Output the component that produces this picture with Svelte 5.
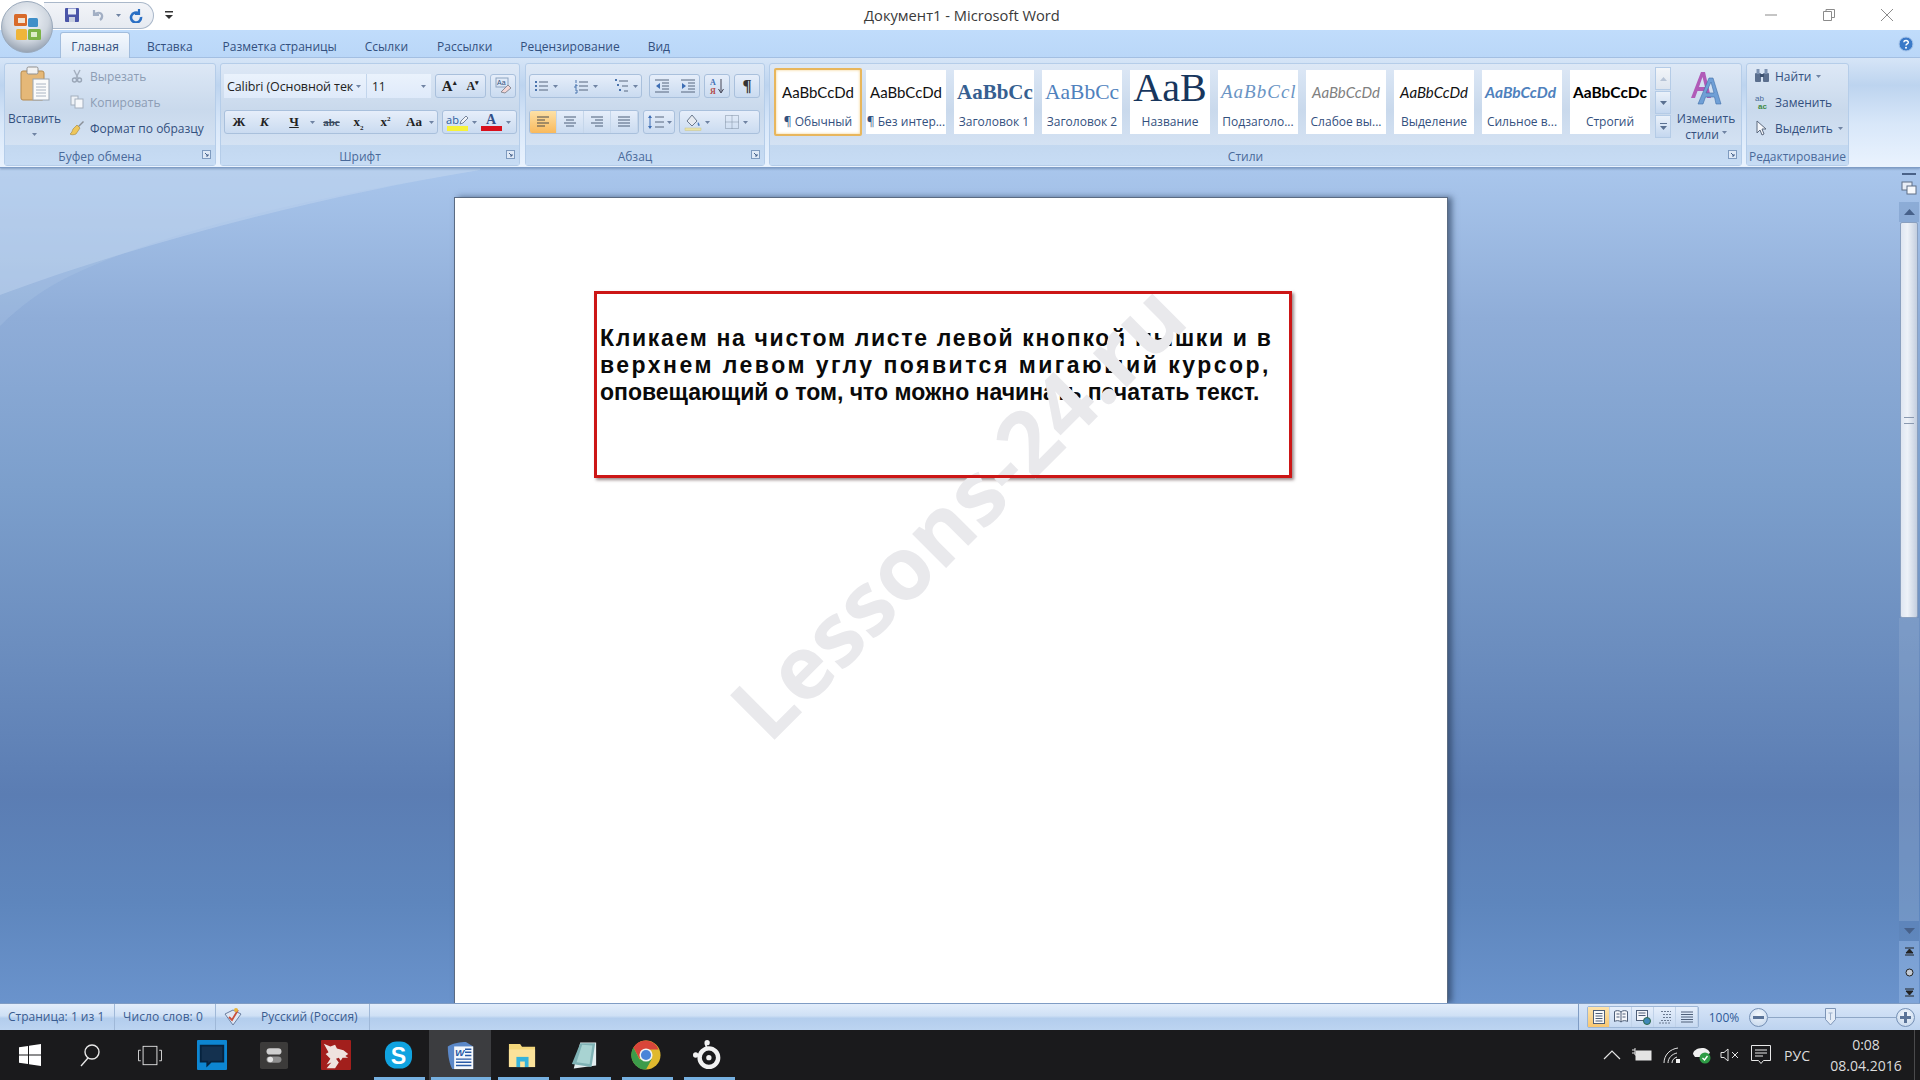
<script>
    const tabs = ["Главная", "Вставка", "Разметка страницы", "Ссылки", "Рассылки", "Рецензирование", "Вид"];

    const styles = [
        { cls: "normal", sample: "AaBbCcDd", name: "¶ Обычный", on: true },
        { cls: "normal", sample: "AaBbCcDd", name: "¶ Без интер..." },
        { cls: "h1", sample: "AaBbCc", name: "Заголовок 1" },
        { cls: "h2", sample: "AaBbCc", name: "Заголовок 2" },
        { cls: "title", sample: "AaB", name: "Название" },
        { cls: "sub", sample: "AaBbCcl", name: "Подзаголо..." },
        { cls: "weak", sample: "AaBbCcDd", name: "Слабое вы..." },
        { cls: "em", sample: "AaBbCcDd", name: "Выделение" },
        { cls: "strong-em", sample: "AaBbCcDd", name: "Сильное в..." },
        { cls: "strong", sample: "AaBbCcDc", name: "Строгий" }
    ];
</script>

{#snippet caret()}
    <svg class="caret" width="5" height="3" viewBox="0 0 5 3"><path d="M0 0h5L2.500 3z" fill="#6f83a3" /></svg>
{/snippet}

{#snippet launcher()}
    <svg class="launcher" width="9" height="9" viewBox="0 0 9 9">
        <rect x=".5" y=".5" width="8" height="8" fill="#dfe9f6" stroke="#7f9bbf" />
        <path d="M3 3l3 3M6 4v2H4" stroke="#46638c" fill="none" />
    </svg>
{/snippet}

<div class="app">
    <header class="titlebar">
        <div class="qat">
            <svg width="16" height="16" viewBox="0 0 16 16">
                <rect x="1" y="1" width="14" height="14" rx="1" fill="#4a55a8" />
                <rect x="4" y="1.500" width="8" height="6" fill="#e8eef8" />
                <rect x="5" y="10" width="6" height="5" fill="#c9d0e0" />
            </svg>
            <svg class="undo" width="16" height="16" viewBox="0 0 16 16">
                <path d="M4 3v5h5M4 8c2-3 7-3 8 0 .5 2-.5 4-2 5" fill="none" stroke="#a2afc4" stroke-width="2.200" />
            </svg>
            {@render caret()}
            <svg class="redo" width="16" height="16" viewBox="0 0 16 16">
                <path d="M11 2v5H7" fill="none" stroke="#2a6fc4" stroke-width="2.200" />
                <path d="M11 6.500A5 5 0 1 0 13 10" fill="none" stroke="#2a6fc4" stroke-width="2.600" />
            </svg>
        </div>
        <svg class="qat-more" width="8" height="10" viewBox="0 0 8 10">
            <rect y="1" width="8" height="1.500" fill="#333" />
            <path d="M0 5h8L4 9z" fill="#333" />
        </svg>
        <div class="doc-title">Документ1 - Microsoft Word</div>
        <div class="winctl">
            <svg width="14" height="14" viewBox="0 0 14 14"><path d="M1 7h12" stroke="#8b8b8b" /></svg>
            <svg width="14" height="14" viewBox="0 0 14 14"><path d="M1.500 3.500h8v9h-8zM4 3.500V1.500h8.500v8h-3" fill="none" stroke="#8b8b8b" /></svg>
            <svg width="14" height="14" viewBox="0 0 14 14"><path d="M1 1l12 12M13 1L1 13" stroke="#8b8b8b" /></svg>
        </div>
    </header>

    <div class="office-btn">
        <svg width="52" height="52" viewBox="0 0 52 52">
            <defs>
                <radialGradient id="orb" cx=".5" cy=".35" r=".7">
                    <stop offset="0" stop-color="#f4f7fb" />
                    <stop offset=".6" stop-color="#cfd6df" />
                    <stop offset="1" stop-color="#8a97a8" />
                </radialGradient>
            </defs>
            <circle cx="26" cy="26" r="25.500" fill="url(#orb)" stroke="#9aa9bb" />
            <rect x="13" y="13" width="13" height="12" rx="1.500" fill="#d86a2a" />
            <rect x="17" y="17" width="7" height="5" fill="#f1e3d2" />
            <rect x="27" y="17" width="10" height="9" rx="1.500" fill="#3f8fc8" />
            <rect x="15" y="28" width="11" height="11" rx="1.500" fill="#efb53a" />
            <rect x="27" y="28" width="13" height="11" rx="1.500" fill="#7cb347" />
            <rect x="30" y="31" width="6" height="5" fill="#dcecc8" />
        </svg>
    </div>

    <nav class="tabs">
        {#each tabs as tab, i}
            <span class="tab tab{i}" class:active={i === 0}>{tab}</span>
        {/each}
        <svg class="help" width="16" height="16" viewBox="0 0 16 16">
            <circle cx="8" cy="8" r="7" fill="#3a79c8" stroke="#a9c6ea" />
            <path d="M5.800 6.200C6 4 10.500 4 10.300 6.500 10.200 8 8 8 8 9.600" fill="none" stroke="#fff" stroke-width="1.500" />
            <circle cx="8" cy="11.800" r="1" fill="#fff" />
        </svg>
    </nav>

    <section class="ribbon">
        <div class="group clip">
            <div class="body clip-body">
                <div class="paste">
                    <svg width="34" height="38" viewBox="0 0 34 38">
                        <rect x="3" y="6" width="23" height="29" rx="2" fill="#e5b878" stroke="#b58a4e" />
                        <rect x="9" y="2" width="11" height="7" rx="1.500" fill="#f2f2f2" stroke="#8f8f8f" />
                        <rect x="15" y="14" width="16" height="21" fill="#fbfbfb" stroke="#9aa5b3" />
                        <path d="M18 19h10M18 22h10M18 25h10M18 28h10M18 31h10" stroke="#aab4c2" />
                    </svg>
                    <span>Вставить</span>
                    {@render caret()}
                </div>
                <div class="stack">
                    <div class="row muted">
                        <svg width="14" height="14" viewBox="0 0 14 14">
                            <path d="M4 1l4 8M10 1L6 9" stroke="#a4afbe" stroke-width="1.400" />
                            <circle cx="4.500" cy="11" r="2" fill="none" stroke="#9aa6b7" stroke-width="1.400" />
                            <circle cx="9.500" cy="11" r="2" fill="none" stroke="#9aa6b7" stroke-width="1.400" />
                        </svg>
                        Вырезать
                    </div>
                    <div class="row muted">
                        <svg width="14" height="14" viewBox="0 0 14 14">
                            <rect x="1" y="1" width="7" height="9" fill="#eef2f7" stroke="#a4afbe" />
                            <rect x="5" y="4" width="8" height="9" fill="#f6f8fb" stroke="#a4afbe" />
                        </svg>
                        Копировать
                    </div>
                    <div class="row">
                        <svg width="16" height="16" viewBox="0 0 16 16">
                            <path d="M9 6l5-5 1 1-5 5z" fill="#8a8f98" />
                            <path d="M8 5l3 3-4 6c-2 1-5 1-6 0 2-1 2-3 3-5z" fill="#eec65a" stroke="#a3853a" stroke-width=".6" />
                        </svg>
                        Формат по образцу
                    </div>
                </div>
            </div>
            <div class="label">Буфер обмена{@render launcher()}</div>
        </div>

        <div class="group font">
            <div class="body tool-body">
                <div class="tools">
                    <div class="combo font-name"><span>Calibri (Основной тек</span>{@render caret()}</div>
                    <div class="combo font-size"><span>11</span>{@render caret()}</div>
                    <div class="tb grow">
                        <span class="t big-a">A<sup>▴</sup></span>
                        <span class="t small-a">A<sup>▾</sup></span>
                    </div>
                    <div class="tb eraser">
                        <svg width="18" height="18" viewBox="0 0 18 18">
                            <text x="3" y="8" font-size="7" font-family="Liberation Sans" fill="#34507a">Aa</text>
                            <rect x="2" y="1" width="12" height="9" fill="none" stroke="#8ca3c0" />
                            <path d="M7 15l7-7 3 3-6 5z" fill="#f3d6d6" stroke="#8c8c96" />
                        </svg>
                    </div>
                </div>
                <div class="tools">
                    <div class="tb format">
                        <span class="t b">Ж</span>
                        <span class="t i">К</span>
                        <span class="t u">Ч</span>{@render caret()}
                        <span class="t s">abc</span>
                        <span class="t sc">x<sub>2</sub></span>
                        <span class="t sc">x<sup>2</sup></span>
                        <span class="t aa">Aa</span>{@render caret()}
                    </div>
                    <div class="tb colors">
                        <span class="swatch">
                            <span class="ab-row">
                                <em class="ab">ab</em>
                                <svg width="9" height="10" viewBox="0 0 9 10"><path d="M1 9l1-3 5-5 2 2-5 5z" fill="#f2f4f8" stroke="#5b6b85" stroke-width=".8" /></svg>
                            </span>
                            <i class="yellow"></i>
                        </span>{@render caret()}
                        <span class="swatch">
                            <em class="aletter">A</em>
                            <i class="red"></i>
                        </span>{@render caret()}
                    </div>
                </div>
            </div>
            <div class="label">Шрифт{@render launcher()}</div>
        </div>

        <div class="group para">
            <div class="body tool-body">
                <div class="tools">
                    <div class="tb lists">
                        <svg width="16" height="16" viewBox="0 0 16 16">
                            <path d="M1 3h2v2H1zM1 7h2v2H1zM1 11h2v2H1z" fill="#4b74ad" />
                            <path d="M5 4h9M5 8h9M5 12h9" stroke="#56677f" />
                        </svg>{@render caret()}
                        <svg class="next" width="16" height="16" viewBox="0 0 16 16">
                            <path d="M2 2v3M1 7h2v1H1v2h2M1 12h2v3H1" fill="none" stroke="#4b74ad" />
                            <path d="M5 4h9M5 8h9M5 12h9" stroke="#56677f" />
                        </svg>{@render caret()}
                        <svg class="next" width="16" height="16" viewBox="0 0 16 16">
                            <path d="M1 2h2M3 7h2M5 12h2" stroke="#4b74ad" stroke-width="2" />
                            <path d="M5 3h9M8 8h6M10 13h4" stroke="#56677f" />
                        </svg>{@render caret()}
                    </div>
                    <div class="tb indents">
                        <svg width="16" height="16" viewBox="0 0 16 16">
                            <path d="M1 2h14M8 5h7M8 8h7M8 11h7M1 14h14" stroke="#56677f" />
                            <path d="M6 5v6L2 8z" fill="#3e6eb4" />
                        </svg>
                        <svg width="16" height="16" viewBox="0 0 16 16">
                            <path d="M1 2h14M8 5h7M8 8h7M8 11h7M1 14h14" stroke="#56677f" />
                            <path d="M2 5v6l4-3z" fill="#3e6eb4" />
                        </svg>
                    </div>
                    <div class="tb single">
                        <svg width="16" height="18" viewBox="0 0 16 18">
                            <text x="1" y="8" font-size="8" font-weight="700" font-family="Liberation Serif" fill="#3e6eb4">А</text>
                            <text x="1" y="17" font-size="8" font-weight="700" font-family="Liberation Serif" fill="#b34b4b">Я</text>
                            <path d="M12 2v13M9.500 12l2.500 4 2.500-4" fill="none" stroke="#445" />
                        </svg>
                    </div>
                    <div class="tb single pil">¶</div>
                </div>
                <div class="tools">
                    <div class="tb aligns">
                        <span class="al on"><svg width="14" height="14" viewBox="0 0 14 14"><path d="M1 2h12M1 5h8M1 8h12M1 11h8" stroke="#4a4a4a" /></svg></span>
                        <span class="al"><svg width="14" height="14" viewBox="0 0 14 14"><path d="M1 2h12M3 5h8M1 8h12M3 11h8" stroke="#4d5f78" /></svg></span>
                        <span class="al"><svg width="14" height="14" viewBox="0 0 14 14"><path d="M1 2h12M5 5h8M1 8h12M5 11h8" stroke="#4d5f78" /></svg></span>
                        <span class="al"><svg width="14" height="14" viewBox="0 0 14 14"><path d="M1 2h12M1 5h12M1 8h12M1 11h12" stroke="#4d5f78" /></svg></span>
                    </div>
                    <div class="tb spacing">
                        <svg width="18" height="16" viewBox="0 0 18 16">
                            <path d="M3 2v12" stroke="#3e6eb4" />
                            <path d="M1 4l2-3 2 3zM1 12l2 3 2-3z" fill="#3e6eb4" />
                            <path d="M8 3h9M8 8h9M8 13h9" stroke="#56677f" />
                        </svg>{@render caret()}
                    </div>
                    <div class="tb shade">
                        <svg width="18" height="18" viewBox="0 0 18 18">
                            <path d="M3 8l5-6 5 6-5 5z" fill="#e6eaf0" stroke="#6c7a8e" />
                            <path d="M14 9c2 2 2 4 1 4s-2-2-1-4z" fill="#4a7cc0" />
                            <rect x="1" y="15" width="16" height="2.500" fill="#e8e3a8" stroke="#c9c48a" stroke-width=".5" />
                        </svg>{@render caret()}
                        <svg class="borders" width="16" height="16" viewBox="0 0 16 16">
                            <path d="M1.500 1.500h13v13h-13zM8 1.500v13M1.500 8h13" fill="none" stroke="#7f8ea3" stroke-dasharray="1 1" />
                        </svg>{@render caret()}
                    </div>
                </div>
            </div>
            <div class="label">Абзац{@render launcher()}</div>
        </div>

        <div class="group styles">
            <div class="body styles-body">
                <div class="gallery">
                    {#each styles as s}
                        <div class="style" class:on={s.on}>
                            <div class="sample {s.cls}">{s.sample}</div>
                            <div class="sname">{s.name}</div>
                        </div>
                    {/each}
                </div>
                <div class="gal-scroll">
                    <span class="dim"><svg width="7" height="4" viewBox="0 0 7 4"><path d="M0 4h7L3.500 0z" fill="#b7c4d6" /></svg></span>
                    <span><svg width="7" height="4" viewBox="0 0 7 4"><path d="M0 0h7L3.500 4z" fill="#5a7091" /></svg></span>
                    <span><svg width="7" height="7" viewBox="0 0 7 7"><path d="M0 0h7v1H0zM0 3h7L3.500 7z" fill="#5a7091" /></svg></span>
                </div>
                <div class="change">
                    <svg width="34" height="36" viewBox="0 0 34 36">
                        <path d="M2 28L12 2h4l6 26h-4l-1.500-7H8.500L6 28zM10 17h6l-2.500-10z" fill="#b05bb8" />
                        <path d="M9 34L20 8h4l8 26h-5l-1.500-7h-9L14 34zM17 23h8l-3-11z" fill="#6f9fd6" stroke="#3f6ea8" stroke-width=".6" />
                    </svg>
                    <span>Изменить</span>
                    <span class="with-caret">стили {@render caret()}</span>
                </div>
            </div>
            <div class="label">Стили{@render launcher()}</div>
        </div>

        <div class="group edit">
            <div class="body">
                <div class="stack edit-stack">
                    <div class="row">
                        <svg width="16" height="16" viewBox="0 0 16 16">
                            <rect x="1" y="5" width="6" height="9" rx="1" fill="#5b6f8e" />
                            <rect x="9" y="5" width="6" height="9" rx="1" fill="#5b6f8e" />
                            <rect x="2.500" y="1" width="3" height="5" fill="#7e93b2" />
                            <rect x="10.500" y="1" width="3" height="5" fill="#7e93b2" />
                            <rect x="6" y="6" width="4" height="3" fill="#3e5270" />
                        </svg>
                        Найти {@render caret()}
                    </div>
                    <div class="row">
                        <svg class="replace" width="16" height="16" viewBox="0 0 16 16">
                            <text x="1" y="7" font-size="8" font-family="Liberation Sans" fill="#4a6a98">ab</text>
                            <text x="4" y="15" font-size="8" font-weight="700" font-family="Liberation Sans" fill="#3f8a46">ac</text>
                        </svg>
                        Заменить
                    </div>
                    <div class="row">
                        <svg width="14" height="16" viewBox="0 0 14 16">
                            <path d="M2 1v12l3-3 2 5 2-1-2-5h4z" fill="#f4f6fa" stroke="#5d6a7f" />
                        </svg>
                        Выделить {@render caret()}
                    </div>
                </div>
            </div>
            <div class="label">Редактирование</div>
        </div>
    </section>

    <main class="workspace">
        <svg class="swoosh" width="480" height="170" viewBox="0 0 480 170" preserveAspectRatio="none">
            <path d="M0 0H480V2C320 28 170 60 70 108 45 120 20 138 0 158z" fill="#c3d6ef" opacity=".18" />
            <path d="M0 0H480V2C320 28 140 75 0 127z" fill="#c6d9f1" opacity=".42" />
        </svg>
        <div class="canvas">
            <div class="page">
                <div class="callout">
                    <p>
                        <span class="l1">Кликаем на чистом листе левой кнопкой мышки и в</span>
                        <span class="l2">верхнем левом углу появится мигающий курсор,</span>
                        <span class="l3">оповещающий о том, что можно начинать печатать текст.</span>
                    </p>
                </div>
                <div class="watermark">Lessons-24.ru</div>
            </div>
        </div>
        <aside class="vscroll">
            <i class="split"></i>
            <svg class="ruler-btn" width="16" height="14" viewBox="0 0 16 14">
                <rect x="1" y="1" width="10" height="8" fill="#e7edf6" stroke="#5f6f86" />
                <rect x="6" y="5" width="9" height="8" fill="#f7f9fc" stroke="#5f6f86" />
            </svg>
            <div class="arrow up"><svg width="11" height="6" viewBox="0 0 11 6"><path d="M0 6h11L5.500 0z" fill="#47618a" /></svg></div>
            <div class="thumb"><i></i></div>
            <div class="track"></div>
            <div class="arrow down"><svg width="11" height="6" viewBox="0 0 11 6"><path d="M0 0h11L5.500 6z" fill="#47618a" /></svg></div>
            <div class="browse">
                <svg width="9" height="9" viewBox="0 0 9 9"><path d="M0 1h9M4.500 2L1 6h7zM0 8h9" stroke="#222" fill="#222" /></svg>
                <svg width="9" height="9" viewBox="0 0 9 9"><circle cx="4.500" cy="4.500" r="3.500" fill="#c3cad4" stroke="#222" /></svg>
                <svg width="9" height="9" viewBox="0 0 9 9"><path d="M0 1h9M4.500 7L1 3h7zM0 8h9" stroke="#222" fill="#222" /></svg>
            </div>
        </aside>
    </main>

    <footer class="status">
        <span class="cell c1">Страница: 1 из 1</span>
        <span class="cell c2">Число слов: 0</span>
        <svg class="spell" width="22" height="20" viewBox="0 0 22 20">
            <path d="M3 7l8-4 8 4-8 11z" fill="#dfe7f4" stroke="#6a7ea0" />
            <path d="M7 10l3 3 6-10" fill="none" stroke="#c9503c" stroke-width="1.800" />
            <circle cx="14" cy="3" r="2" fill="#e8b43c" />
        </svg>
        <span class="cell c3">Русский (Россия)</span>
        <div class="status-right">
            <div class="views">
                <span class="view on"><svg width="16" height="16" viewBox="0 0 16 16"><rect x="2.500" y="1.500" width="11" height="13" fill="#fafafa" stroke="#4e5f78" /><path d="M4.500 4.500h7M4.500 7h7M4.500 9.500h7M4.500 12h7" stroke="#4e5f78" /></svg></span>
                <span class="view"><svg width="16" height="16" viewBox="0 0 16 16"><path d="M8 3C6 1 3 1.500 1.500 2.500v10C3 11.500 6 11 8 13c2-2 5-1.500 6.500-.5v-10C13 1.500 10 1 8 3z" fill="#f4f6fa" stroke="#4e5f78" /><path d="M8 3v10M3.500 5h3M3.500 8h3M9.500 5h3M9.500 8h3" stroke="#4e5f78" /></svg></span>
                <span class="view"><svg width="16" height="16" viewBox="0 0 16 16"><rect x="1.500" y="1.500" width="11" height="10" fill="#f4f6fa" stroke="#4e5f78" /><path d="M3.500 4h7M3.500 6.500h7" stroke="#4e5f78" /><circle cx="12" cy="12" r="3.500" fill="#3f87b8" stroke="#2f6b4a" /></svg></span>
                <span class="view"><svg width="16" height="16" viewBox="0 0 16 16"><path d="M4 2.500h10M6 5.500h8M6 8.500h8M4 11.500h10M2 14h12" stroke="#6a7a91" stroke-dasharray="2 1" /></svg></span>
                <span class="view"><svg width="16" height="16" viewBox="0 0 16 16"><path d="M2 3h12M2 5.500h12M2 8h12M2 10.500h12M2 13h12" stroke="#4e5f78" /></svg></span>
            </div>
            <span class="zoom-val">100%</span>
            <span class="round"><i></i></span>
            <div class="slider">
                <svg class="slider-thumb" width="11" height="18" viewBox="0 0 11 18">
                    <path d="M.5.500h10v11l-5 5.500-5-5.500z" fill="#e4ecf7" stroke="#7d95b7" />
                    <path d="M3.500 5h4M5.500 5v7" stroke="#9db0ca" />
                </svg>
            </div>
            <span class="round plus"><i></i><b></b></span>
        </div>
    </footer>

    <div class="taskbar">
        <div class="launchers">
            <span class="tk sys">
                <svg width="22" height="22" viewBox="0 0 22 22"><path d="M0 3.200l9-1.300V10.500H0zM10 1.800L22 0V10.500H10zM0 11.500h9v8.600l-9-1.300zM10 11.500H22V22l-12-1.800z" fill="#fff" /></svg>
            </span>
            <span class="tk sys">
                <svg width="22" height="24" viewBox="0 0 22 24"><circle cx="13" cy="9" r="7" fill="none" stroke="#e8e8e8" stroke-width="1.400" /><path d="M9 15L2 23" stroke="#e8e8e8" stroke-width="1.400" /></svg>
            </span>
            <span class="tk sys">
                <svg width="24" height="21" viewBox="0 0 26 24" preserveAspectRatio="none"><rect x="5.500" y="1.500" width="15" height="21" fill="none" stroke="#e8e8e8" /><path d="M3 6H.5v12H3M23 6h2.500v12H23" fill="none" stroke="#e8e8e8" /></svg>
            </span>
            <span class="tk first-app">
                <svg width="30" height="30" viewBox="0 0 32 32"><rect width="32" height="32" rx="1" fill="#0d86d2" /><path d="M4 6h24v17H15l-4 4v-4H4z" fill="#14314f" stroke="#06233f" stroke-width="2" /></svg>
            </span>
            <span class="tk">
                <svg width="28" height="27" viewBox="0 0 30 30" preserveAspectRatio="none"><rect width="30" height="30" rx="2" fill="#3c3b3a" /><rect x="7" y="7" width="16" height="7" rx="3.500" fill="#cfcfcf" /><rect x="7" y="16" width="16" height="7" rx="3.500" fill="#8f8f8f" /><circle cx="11" cy="19.500" r="3" fill="#e4e4e4" /></svg>
            </span>
            <span class="tk">
                <svg width="30" height="30" viewBox="0 0 32 32"><rect width="32" height="32" rx="1" fill="#a21f1c" /><path d="M3 4l7 3 5-2 2 4 7 2 5 4-3 2 3 2-6 0-2 3-2-3-3 1 3 4-4 6H6l5-6-5 2 4-6-5-5 3-2z" fill="#efe3de" /></svg>
            </span>
            <span class="tk">
                <svg width="29" height="30" viewBox="0 0 30 30"><rect x="1" y="1" width="28" height="28" rx="12" fill="#10a3e0" /><text x="15" y="24" text-anchor="middle" font-size="24" font-weight="700" font-family="Liberation Sans" fill="#fff">S</text></svg>
            </span>
            <span class="tk word">
                <svg width="29" height="29" viewBox="0 0 32 32">
                    <path d="M2 6c6-4 14-5 20-5l8 5v25H7C4 26 2 17 2 6z" fill="#5b88c8" />
                    <path d="M9 6h21v25H9z" fill="#f5f8fc" />
                    <text x="10" y="17" font-size="11" font-weight="700" font-style="italic" font-family="Liberation Sans" fill="#2a5ba6">W</text>
                    <path d="M21 9h7M21 12.500h7M21 16h7M11 20h17M11 23.500h17M11 27h17" stroke="#2a5ba6" stroke-width="1.600" />
                </svg>
            </span>
            <span class="tk">
                <svg width="28" height="25" viewBox="0 0 30 27" preserveAspectRatio="none">
                    <path d="M1 1h12l2 3h14v22H1z" fill="#f3d77b" />
                    <path d="M1 7h28v19H1z" fill="#fbe29a" />
                    <rect x="9" y="15" width="13" height="11" fill="#35b3dc" />
                    <rect x="13" y="20" width="5" height="6" fill="#fbe29a" />
                </svg>
            </span>
            <span class="tk">
                <svg width="28" height="29" viewBox="0 0 30 38" preserveAspectRatio="none">
                    <path d="M11 2h17v30L4 36z" fill="#e4eef0" />
                    <path d="M11 3L2 30l21 4 4-31z" fill="#7fb2b5" />
                    <path d="M13 5l11 1-3 24L7 28z" fill="#a8d3d2" />
                </svg>
            </span>
            <span class="tk">
                <svg width="30" height="32" viewBox="0 0 32 34">
                    <circle cx="16" cy="17" r="15.500" fill="#e0b92e" />
                    <path d="M16 1.500A15.500 15.500 0 0 0 2.600 9L9 21l7-10h13.400A15.500 15.500 0 0 0 16 1.500z" fill="#d8453a" />
                    <path d="M2.600 9A15.500 15.500 0 0 0 16 32.500l6-11H9z" fill="#3c9b4a" />
                    <circle cx="16" cy="17" r="7" fill="#f0f2f5" />
                    <circle cx="16" cy="17" r="5.400" fill="#4a84d8" />
                </svg>
            </span>
            <span class="tk">
                <svg width="30" height="32" viewBox="0 0 34 36">
                    <circle cx="18" cy="21" r="10.500" fill="none" stroke="#f2f2f2" stroke-width="5" />
                    <circle cx="18" cy="21" r="3" fill="#f2f2f2" />
                    <circle cx="16" cy="4" r="3" fill="#f2f2f2" />
                    <circle cx="3" cy="18" r="3" fill="#f2f2f2" />
                    <path d="M14 5l2 6M4 18l5 1" stroke="#f2f2f2" stroke-width="2" />
                </svg>
            </span>
        </div>
        <div class="running">
            <i class="r0"></i><i class="r1"></i><i></i><i></i><i></i><i></i>
        </div>
        <div class="tray">
            <svg width="18" height="10" viewBox="0 0 18 10"><path d="M1 9l8-8 8 8" fill="none" stroke="#e4e4e4" stroke-width="1.200" /></svg>
            <svg width="20" height="14" viewBox="0 0 20 14"><path d="M0 2h3M0 5h3M3 0v7h2" stroke="#e4e4e4" fill="none" /><rect x="4" y="3" width="15" height="9" fill="#e4e4e4" stroke="#e4e4e4" /></svg>
            <svg width="18" height="18" viewBox="0 0 18 18"><path d="M1 17C1 9 7 3 15 2M5 17c0-5 4-9 9-10M9 17c0-3 2-5 5-6" fill="none" stroke="#e4e4e4" /><rect x="13" y="13" width="4" height="4" fill="#f2f2f2" /></svg>
            <svg width="20" height="18" viewBox="0 0 20 18"><path d="M1 8c0-3 4-6 9-6 4 0 7 2 8 5l-6 4H3z" fill="#f0f0f0" /><circle cx="13" cy="12" r="5.500" fill="#2e9b45" /><path d="M10.500 12l2 2 3-4" fill="none" stroke="#fff" stroke-width="1.400" /></svg>
            <svg class="vol" width="20" height="14" viewBox="0 0 20 14"><path d="M1 4.500h3L8 1v12L4 9.500H1z" fill="none" stroke="#e4e4e4" /><path d="M12 4l6 6M18 4l-6 6" stroke="#e4e4e4" /></svg>
            <svg class="notif" width="20" height="22" viewBox="0 0 20 22"><path d="M.5 1.500h19v15h-7l-2.500 3-2.500-3h-7z" fill="none" stroke="#e8e8e8" /><path d="M4 6h12M4 9h12M4 12h8" stroke="#e8e8e8" /></svg>
            <span class="lang">РУС</span>
            <div class="clock">
                <span>0:08</span>
                <span>08.04.2016</span>
            </div>
            <i class="show-desktop"></i>
        </div>
    </div>
</div>

<style>
    :global(body) {
        margin: 0;
        background: #fff;
    }

    .app {
        position: relative;
        width: 1920px;
        height: 1080px;
        display: flex;
        flex-direction: column;
        overflow: hidden;
        font-family: "Open Sans", "Noto Sans", sans-serif;
        font-size: 12px;
        color: #3b5a8a;
    }

    .titlebar {
        height: 30px;
        flex: none;
        background: #fff;
        display: flex;
        align-items: center;
        position: relative;
    }

    .qat {
        margin-left: 44px;
        width: 110px;
        height: 27px;
        box-sizing: border-box;
        display: flex;
        align-items: center;
        gap: 10px;
        padding-left: 20px;
        background: linear-gradient(#f2f4f8, #e6eaf1);
        border: 1px solid #aab8ca;
        border-left: none;
        border-radius: 0 14px 14px 0;
    }

    .redo {
        margin-left: -3px;
    }

    .qat-more {
        margin-left: 11px;
    }

    .doc-title {
        position: absolute;
        left: 864px;
        top: 5px;
        font-size: 14.700px;
        color: #3a3a3a;
        line-height: 20px;
        white-space: nowrap;
    }

    .winctl {
        margin-left: auto;
        display: flex;
        gap: 44px;
        padding-right: 26px;
    }

    .office-btn {
        position: absolute;
        left: 1px;
        top: 1px;
        z-index: 5;
        width: 52px;
        height: 52px;
    }

    .tabs {
        height: 28px;
        flex: none;
        background: linear-gradient(#c0dcfb, #bad7f8);
        display: flex;
        align-items: center;
        padding-left: 60px;
        position: relative;
        box-sizing: border-box;
        border-bottom: 1px solid #a7c3e6;
    }

    .tab {
        color: #33507e;
        white-space: nowrap;
        position: relative;
        top: 3px;
    }

    .tab0 {
        top: 0;
        width: 70px;
        height: 26px;
        margin-top: 2px;
        box-sizing: border-box;
        text-align: center;
        line-height: 27px;
        background: linear-gradient(#f4f8fd, #dce8f6);
        border: 1px solid #a2bddd;
        border-bottom: none;
        border-radius: 3px 3px 0 0;
    }

    .tab1 {
        margin-left: 17px;
    }

    .tab2 {
        margin-left: 30px;
    }

    .tab3 {
        margin-left: 28px;
    }

    .tab4 {
        margin-left: 29px;
    }

    .tab5 {
        margin-left: 28px;
    }

    .tab6 {
        margin-left: 28px;
    }

    .help {
        position: absolute;
        right: 6px;
        top: 6px;
    }

    .ribbon {
        height: 110px;
        flex: none;
        box-sizing: border-box;
        display: flex;
        gap: 4px;
        padding: 5px 0 2px 4px;
        background: linear-gradient(#d6e5f7, #bdd4ef 25%, #d8e7f9 60%, #eaf3fe);
        border-bottom: 1px solid #7f9dc6;
        box-shadow: 0 1px 2px rgba(60, 90, 130, 0.4);
        z-index: 2;
    }

    .group {
        display: flex;
        flex-direction: column;
        height: 103px;
        box-sizing: border-box;
        border: 1px solid #b5cde9;
        border-radius: 3px;
        background: linear-gradient(#dde8f6, #c9d9ec 45%, #dae7f7);
    }

    .clip {
        width: 212px;
    }

    .font {
        width: 300px;
    }

    .para {
        width: 240px;
        margin-left: 1px;
    }

    .styles {
        width: 973px;
    }

    .edit {
        width: 103px;
    }

    .body {
        flex: 1;
        min-height: 0;
    }

    .label {
        height: 20px;
        flex: none;
        position: relative;
        box-sizing: border-box;
        padding-right: 20px;
        text-align: center;
        line-height: 24px;
        color: #4a6a9a;
        background: linear-gradient(#c3d8f0, #c7dcf4);
        white-space: nowrap;
        overflow: hidden;
    }

    .edit .label {
        padding-right: 0;
    }

    .launcher {
        position: absolute;
        right: 4px;
        top: 5px;
    }

    .clip-body {
        display: flex;
    }

    .paste {
        width: 59px;
        flex: none;
        box-sizing: border-box;
        display: flex;
        flex-direction: column;
        align-items: center;
        color: #33507e;
        line-height: 16px;
    }

    .paste svg:first-child {
        margin-top: 1px;
        margin-bottom: 8px;
    }

    .paste .caret {
        margin-top: 6px;
    }

    .stack {
        display: flex;
        flex-direction: column;
        margin-top: -1px;
    }

    .clip-body .stack {
        padding-left: 5px;
    }

    .row {
        height: 26px;
        display: flex;
        align-items: center;
        gap: 5px;
        white-space: nowrap;
        color: #33507e;
    }

    .row svg:first-child {
        width: 16px;
        flex: none;
    }

    .row .caret {
        width: 5px;
    }

    .muted {
        color: #8d9db4;
    }

    .edit-stack {
        padding-left: 7px;
    }

    .tool-body {
        padding: 10px 0 0 3px;
        display: flex;
        flex-direction: column;
        gap: 12px;
    }

    .tools {
        height: 24px;
        display: flex;
        gap: 4px;
    }

    .combo {
        height: 24px;
        display: flex;
        align-items: center;
        justify-content: space-between;
        box-sizing: border-box;
        padding: 0 5px 0 3px;
        background: linear-gradient(#eaf2fc, #dfeafa);
        color: #222;
        white-space: nowrap;
    }

    .font-name {
        width: 143px;
        font-size: 12.500px;
        border-right: 1px solid #c2d5ec;
    }

    .font-name span {
        letter-spacing: -0.1px;
    }

    .font-size {
        width: 64px;
        margin-left: -4px;
        padding-left: 5px;
    }

    .tb {
        height: 24px;
        box-sizing: border-box;
        border: 1px solid #a9c0dc;
        border-radius: 3px;
        background: linear-gradient(#e6eefa, #cadbf0);
        display: flex;
        align-items: center;
        justify-content: center;
        color: #222;
    }

    .t {
        font-family: "Liberation Serif", serif;
        font-weight: 700;
        display: inline-block;
        text-align: center;
    }

    .t sup,
    .t sub {
        font-size: 7px;
        line-height: 0;
    }

    .grow {
        width: 51px;
        gap: 10px;
    }

    .big-a {
        font-size: 15px;
    }

    .small-a {
        font-size: 12px;
    }

    .eraser {
        width: 26px;
    }

    .format {
        width: 214px;
        justify-content: flex-start;
        padding-left: 2px;
    }

    .format .t {
        width: 27px;
        font-size: 13px;
    }

    .format .b {
        width: 24px;
    }

    .format .i {
        font-style: italic;
    }

    .format .u {
        width: 32px;
        text-decoration: underline;
    }

    .format .s {
        text-decoration: line-through;
        font-size: 11px;
        margin-left: 3px;
        color: #3a4a60;
    }

    .format .aa {
        width: 30px;
    }

    .colors {
        width: 75px;
        gap: 4px;
        padding-right: 2px;
    }

    .swatch {
        width: 21px;
        display: flex;
        flex-direction: column;
        align-items: center;
    }

    .ab-row {
        display: flex;
        align-items: center;
    }

    .swatch em {
        font-style: normal;
        font-size: 11px;
        line-height: 13px;
    }

    .ab {
        color: #2d5e9e;
    }

    .aletter {
        font-family: "Liberation Serif", serif;
        font-weight: 700;
        font-size: 14px !important;
        color: #33508a;
    }

    .swatch i {
        display: block;
        width: 21px;
        height: 5px;
    }

    .yellow {
        background: #f6f23a;
    }

    .red {
        background: #d8101c;
    }

    .lists {
        width: 113px;
        gap: 3px;
        justify-content: flex-start;
        padding-left: 4px;
    }

    .lists .next {
        margin-left: 13px;
    }

    .indents {
        width: 51px;
        gap: 10px;
        margin-left: 3px;
    }

    .single {
        width: 26px;
    }

    .pil {
        font-family: "Liberation Serif", serif;
        font-size: 17px;
        font-weight: 700;
        color: #333;
    }

    .aligns {
        width: 110px;
        padding: 0;
        overflow: hidden;
        justify-content: flex-start;
    }

    .al {
        width: 27.500px;
        height: 100%;
        display: flex;
        align-items: center;
        justify-content: center;
        border-right: 1px solid #c5d6ea;
        box-sizing: border-box;
    }

    .al.on {
        background: linear-gradient(#fde1a6, #f9b95c);
    }

    .spacing {
        width: 32px;
        gap: 2px;
    }

    .shade {
        width: 81px;
        gap: 3px;
        justify-content: flex-start;
        padding-left: 4px;
    }

    .borders {
        margin-left: 11px;
    }

    .styles-body {
        display: flex;
        padding: 4px 0 0 4px;
        box-sizing: border-box;
    }

    .gallery {
        width: 880px;
        height: 67px;
        display: flex;
        align-items: center;
        gap: 8px;
        padding-left: 4px;
        box-sizing: border-box;
    }

    .style {
        width: 80px;
        height: 64px;
        flex: none;
        background: #fff;
        display: flex;
        flex-direction: column;
        align-items: center;
        overflow: hidden;
    }

    .style.on {
        width: 88px;
        height: 68px;
        margin: 0 -4px;
        box-sizing: border-box;
        border: 2px solid #e8b65c;
        border-radius: 2px;
        box-shadow: inset 0 0 3px #f3cf86;
    }

    .sample {
        height: 41px;
        width: 100%;
        flex: none;
        line-height: 44px;
        text-align: center;
        white-space: nowrap;
        overflow: hidden;
        color: #111;
        font-family: Lato, sans-serif;
        font-size: 15px;
    }

    .sname {
        height: 23px;
        line-height: 22px;
        color: #33507e;
        white-space: nowrap;
    }

    .h1,
    .h2 {
        font-family: "Liberation Serif", serif;
        font-weight: 700;
        font-size: 21px;
        color: #365f91;
        text-align: left;
        padding-left: 3px;
        box-sizing: border-box;
    }

    .h2 {
        color: #4f81bd;
        font-weight: 400;
        font-size: 21.500px;
    }

    .title {
        font-family: "Liberation Serif", serif;
        font-size: 40px;
        color: #17365d;
        line-height: 36px;
    }

    .sub {
        font-family: "Liberation Serif", serif;
        font-style: italic;
        font-size: 19px;
        letter-spacing: 1px;
        color: #6a94c4;
        text-align: left;
        padding-left: 3px;
        box-sizing: border-box;
    }

    .weak {
        font-style: italic;
        color: #808080;
    }

    .em {
        font-style: italic;
    }

    .strong-em {
        font-style: italic;
        font-weight: 700;
        font-size: 15.500px;
        color: #4f81bd;
        text-align: left;
        padding-left: 3px;
        box-sizing: border-box;
    }

    .strong {
        font-weight: 700;
        font-size: 15.500px;
        text-align: left;
        padding-left: 3px;
        box-sizing: border-box;
        color: #000;
    }

    .gal-scroll {
        width: 16px;
        height: 71px;
        margin-left: 1px;
        margin-top: -1px;
        display: flex;
        flex-direction: column;
        gap: 1px;
    }

    .gal-scroll span {
        flex: 1;
        display: flex;
        align-items: center;
        justify-content: center;
        background: linear-gradient(#eaf1fa, #c4d7ef);
        border: 1px solid #b4cbe6;
        box-sizing: border-box;
    }

    .gal-scroll .dim {
        background: linear-gradient(#f2f5f9, #dde5ef);
    }

    .change {
        width: 68px;
        display: flex;
        flex-direction: column;
        align-items: center;
        color: #33507e;
        line-height: 16px;
        margin-left: 1px;
        padding-top: 2px;
    }

    .change svg:first-child {
        margin-bottom: 5px;
    }

    .with-caret {
        display: inline-flex;
        align-items: center;
        gap: 3px;
    }

    .workspace {
        flex: 1;
        min-height: 0;
        position: relative;
        display: flex;
        background: linear-gradient(#a9c6ec 0, #8fadd8 18%, #7c9fcc 38%, #6c8ebf 57%, #5b7db3 75%, #5e86bd 88%, #6a93cc 100%);
    }

    .swoosh {
        position: absolute;
        left: 0;
        top: 0;
    }

    .canvas {
        flex: 1;
        position: relative;
        padding: 29px 0 0 454px;
        overflow: hidden;
        display: flex;
    }

    .page {
        width: 994px;
        position: relative;
        background: #fff;
        box-sizing: border-box;
        border: 1px solid #5b6b82;
        border-bottom: none;
        box-shadow: 4px 0 6px rgba(40, 60, 90, 0.65);
        overflow: hidden;
        z-index: 1;
    }

    .callout {
        margin: 93px 0 0 139px;
        width: 698px;
        height: 187px;
        box-sizing: border-box;
        padding: 34px 0 0 6px;
        box-shadow: 2px 2px 3px rgba(70, 40, 40, 0.55);
    }

    .callout::after {
        content: "";
        position: absolute;
        left: 139px;
        top: 93px;
        width: 698px;
        height: 187px;
        box-sizing: border-box;
        border: 3px solid #cc1616;
        z-index: 3;
    }

    .callout p {
        margin: 0;
        font-family: "Liberation Sans", Arial, sans-serif;
        font-weight: 700;
        font-size: 23px;
        line-height: 27px;
        color: #0a0a0a;
    }

    .callout span {
        display: block;
        white-space: nowrap;
    }

    .l1 {
        letter-spacing: 1.680px;
    }

    .l2 {
        letter-spacing: 2.480px;
    }

    .watermark {
        position: absolute;
        left: 501px;
        top: 312px;
        transform: translate(-50%, -50%) rotate(-45deg);
        font-family: "Open Sans", sans-serif;
        font-weight: 700;
        font-size: 88px;
        line-height: 1;
        white-space: nowrap;
        color: #e9e9ec;
        z-index: 2;
    }

    .vscroll {
        width: 22px;
        flex: none;
        display: flex;
        flex-direction: column;
        align-items: center;
    }

    .split {
        width: 14px;
        height: 2px;
        margin: 5px 0 6px;
        background: #4a6288;
    }

    .ruler-btn {
        margin-bottom: 7px;
    }

    .arrow {
        width: 20px;
        height: 20px;
        flex: none;
        display: flex;
        align-items: center;
        justify-content: center;
        background: rgba(90, 125, 175, 0.3);
    }

    .thumb {
        width: 18px;
        height: 396px;
        flex: none;
        box-sizing: border-box;
        border: 1px solid #8aa0c0;
        border-radius: 2px;
        background: linear-gradient(90deg, #dfe6f1, #eef2f8 40%, #c3cedf);
        display: flex;
        align-items: center;
        justify-content: center;
    }

    .thumb i {
        width: 10px;
        height: 5px;
        border-top: 1px solid #8a99b0;
        border-bottom: 1px solid #8a99b0;
        position: relative;
    }

    .track {
        width: 20px;
        height: 303px;
        flex: none;
        background: rgba(150, 175, 210, 0.35);
    }

    .browse {
        flex: 1;
        width: 20px;
        background: rgba(170, 200, 240, 0.35);
        display: flex;
        flex-direction: column;
        align-items: center;
        justify-content: space-between;
        padding: 6px 0 6px;
        box-sizing: border-box;
    }

    .status {
        height: 27px;
        flex: none;
        display: flex;
        align-items: center;
        background: linear-gradient(#e2edfb, #cfe0f5 45%, #b3cded 55%, #bcd4f1);
        border-top: 1px solid #7f9cc4;
        box-sizing: border-box;
        color: #3a5c90;
        z-index: 2;
    }

    .cell {
        height: 100%;
        line-height: 25px;
        white-space: nowrap;
        box-sizing: border-box;
    }

    .c1 {
        width: 115px;
        padding-left: 8px;
        border-right: 1px solid #9fb8d8;
    }

    .c2 {
        width: 101px;
        padding-left: 8px;
        border-right: 1px solid #9fb8d8;
        letter-spacing: 0.1px;
    }

    .spell {
        margin: 0 0 0 6px;
    }

    .c3 {
        width: 126px;
        padding-left: 17px;
        border-right: 1px solid #9fb8d8;
    }

    .status-right {
        margin-left: auto;
        width: 342px;
        height: 100%;
        box-sizing: border-box;
        padding-left: 8px;
        display: flex;
        align-items: center;
        border-left: 1px solid #7f9cc4;
        background: linear-gradient(#d7e5f8, #bdd3ef);
    }

    .views {
        width: 112px;
        height: 22px;
        display: flex;
        box-sizing: border-box;
        border: 1px solid #9db6d6;
        border-radius: 2px;
        background: linear-gradient(#e6effb, #c6d9f1);
    }

    .view {
        flex: 1;
        display: flex;
        align-items: center;
        justify-content: center;
        border-right: 1px solid #c0d2e9;
    }

    .view.on {
        background: linear-gradient(#fde3ac, #f8c772);
    }

    .zoom-val {
        width: 50px;
        text-align: center;
        color: #2f5a98;
    }

    .round {
        width: 19px;
        height: 19px;
        flex: none;
        border-radius: 50%;
        box-sizing: border-box;
        border: 1px solid #7590b5;
        background: radial-gradient(circle at 50% 35%, #f4f8fd, #c0d3ea);
        position: relative;
    }

    .round i,
    .round b {
        position: absolute;
        background: #5a7398;
    }

    .round i {
        left: 3px;
        right: 3px;
        top: 7px;
        height: 3px;
    }

    .round b {
        top: 3px;
        bottom: 3px;
        left: 7px;
        width: 3px;
    }

    .slider {
        width: 128px;
        height: 1px;
        flex: none;
        background: #8ea6c6;
        position: relative;
    }

    .slider-thumb {
        position: absolute;
        left: 57px;
        top: -9px;
    }

    .taskbar {
        height: 50px;
        flex: none;
        position: relative;
        display: flex;
        align-items: flex-start;
        background: #1a1a1c;
        color: #dcdcdc;
    }

    .launchers {
        display: flex;
    }

    .tk {
        width: 62px;
        height: 50px;
        flex: none;
        display: flex;
        align-items: center;
        justify-content: center;
    }

    .tk.sys {
        width: 60px;
    }

    .first-app {
        margin-left: 1px;
    }

    .word {
        background: #3c3d40;
    }

    .running {
        position: absolute;
        left: 374px;
        bottom: 0;
        display: flex;
        gap: 11px;
    }

    .running i {
        width: 51px;
        height: 3px;
        background: #76b0e0;
    }

    .running .r0 {
        margin-right: -5px;
    }

    .running .r1 {
        width: 60px;
        margin-right: -4px;
    }

    .tray {
        margin-left: auto;
        height: 50px;
        display: flex;
        align-items: center;
        gap: 11px;
        padding-right: 5px;
    }

    .vol {
        margin-left: -3px;
    }

    .lang {
        font-size: 14px;
        margin-left: 2px;
    }

    .clock {
        width: 74px;
        display: flex;
        flex-direction: column;
        align-items: center;
        font-size: 14px;
        line-height: 21px;
        margin-left: 8px;
        white-space: nowrap;
    }

    .show-desktop {
        width: 1px;
        height: 50px;
        background: #4a4a4c;
    }
</style>
